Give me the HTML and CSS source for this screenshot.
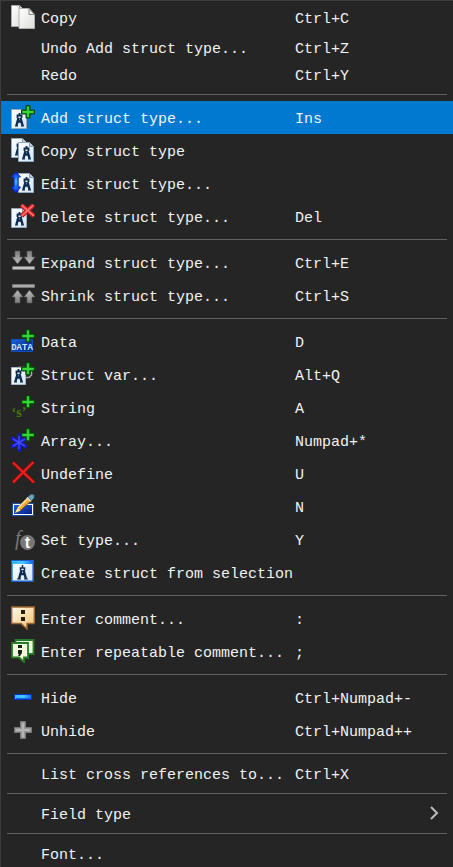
FILE: index.html
```html
<!DOCTYPE html>
<html lang="en">
<head>
<meta charset="utf-8">
<title>Structures menu</title>
<link rel="stylesheet" href="styles.css">
</head>
<body>
<svg class="sprite" aria-hidden="true">
  <defs>
    <linearGradient id="paper" x1="0" y1="0" x2="1" y2="1"><stop offset="0" stop-color="#fff"/><stop offset="1" stop-color="#dededa"/></linearGradient>
    <linearGradient id="sheet" x1="0" y1="0" x2="1" y2="1"><stop offset="0" stop-color="#fff"/><stop offset="1" stop-color="#d3e4f2"/></linearGradient>
    <linearGradient id="steel" x1="0" y1="0" x2="0" y2="1"><stop offset="0" stop-color="#7c7c7c"/><stop offset="1" stop-color="#bdbdbd"/></linearGradient>
    <linearGradient id="blue" x1="0" y1="0" x2="1" y2="1"><stop offset="0" stop-color="#1b62d8"/><stop offset="1" stop-color="#0a1c86"/></linearGradient>
    <linearGradient id="cream" x1="0" y1="0" x2="1" y2="1"><stop offset="0" stop-color="#fffbe6"/><stop offset="1" stop-color="#f5c06c"/></linearGradient>
    <linearGradient id="bar" x1="0" y1="0" x2="1" y2="0"><stop offset="0" stop-color="#35b4ff"/><stop offset=".5" stop-color="#45caff"/><stop offset="1" stop-color="#1268f0"/></linearGradient>
    <linearGradient id="updown" x1="0" y1="0" x2="0" y2="1"><stop offset="0" stop-color="#0718e8"/><stop offset=".45" stop-color="#39b6fa"/><stop offset="1" stop-color="#0718e8"/></linearGradient>
    <g id="compass" fill="none" stroke="#0d2c50">
      <path d="M4.500 0v2M2.500 5V2.500h4V5" stroke-width="1.800"/>
      <path d="M3.500 5L1.300 13M5.500 5l2.200 8M2 8.500h5" stroke-width="2.400"/>
      <path d="M0 13h3M6 13h3" stroke-width="1.200"/>
    </g>
    <g id="struct">
      <path d="M.5 4.500h11l4 4v15H.5z" fill="url(#sheet)" stroke="#8fa9c0"/>
      <path d="M11.500 4.500v4h4" fill="#bdd0df" stroke="#8398aa"/>
      <use href="#compass" x="4" y="8"/>
    </g>
    <g id="plus">
      <path d="M15 .5h4V5h4.500v4H19v4h-4V9h-4.500V5H15z" fill="#0b8c17" stroke="#06420b"/>
      <path d="M17 1.500v10.500M11.500 7h11" stroke="#36d63a" stroke-width="1.800" fill="none"/>
    </g>
    <g id="arrow-down">
      <path d="M3 0h5v6h3L5.500 13 0 6h3z" fill="url(#steel)" stroke="#555" stroke-width=".6"/>
    </g>
  </defs>
</svg>

<main class="menu" role="menu">
  <button class="item" role="menuitem">
    <svg class="icon" viewBox="0 0 24 24" aria-hidden="true">
      <path d="M.5.5h8l4 4v17H.5z" fill="url(#paper)" stroke="#aaa"/><path d="M8.500.5v4h4" fill="#ccc" stroke="#999"/>
      <path d="M8 3.500h10l5.500 6v14H8z" fill="url(#paper)" stroke="#b0b0b0"/><path d="M18 3.500v6h5.500z" fill="#eee" stroke="#888"/>
    </svg>
    <span class="label">Copy</span><kbd>Ctrl+C</kbd>
  </button>
  <button class="item plain" role="menuitem"><span class="label">Undo Add struct type...</span><kbd>Ctrl+Z</kbd></button>
  <button class="item plain" role="menuitem"><span class="label">Redo</span><kbd>Ctrl+Y</kbd></button>
  <hr>
  <button class="item active" role="menuitem">
    <svg class="icon" viewBox="0 0 24 24" aria-hidden="true"><use href="#struct"/><use href="#plus"/></svg>
    <span class="label">Add struct type...</span><kbd>Ins</kbd>
  </button>
  <button class="item" role="menuitem">
    <svg class="icon" viewBox="0 0 24 24" aria-hidden="true"><use href="#struct" y="-4"/><use href="#struct" x="7"/></svg>
    <span class="label">Copy struct type</span>
  </button>
  <button class="item" role="menuitem">
    <svg class="icon" viewBox="0 0 24 24" aria-hidden="true">
      <use href="#struct" x="7" y="-2"/>
      <path d="M5 1L9.500 6H7v10h2.500L5 22 .5 16H3V6H.5z" fill="url(#updown)" stroke="#0726cd"/>
    </svg>
    <span class="label">Edit struct type...</span>
  </button>
  <button class="item" role="menuitem">
    <svg class="icon" viewBox="0 0 24 24" aria-hidden="true"><use href="#struct"/><path d="M10.500 1l12.500 11M22.500 1L10.500 12" stroke="#c81818" stroke-width="4.500"/><path d="M10.500 1l12.500 11M22.500 1L10.500 12" stroke="#fa6a6a" stroke-width="2"/></svg>
    <span class="label">Delete struct type...</span><kbd>Del</kbd>
  </button>
  <hr>
  <button class="item" role="menuitem">
    <svg class="icon" viewBox="0 0 24 24" aria-hidden="true"><use href="#arrow-down" x="1" y="1"/><use href="#arrow-down" x="13" y="1"/><path d="M1.500 16.500h22v3h-22z" fill="#c4c4c4" stroke="#787878"/></svg>
    <span class="label">Expand struct type...</span><kbd>Ctrl+E</kbd>
  </button>
  <button class="item" role="menuitem">
    <svg class="icon" viewBox="0 0 24 24" aria-hidden="true"><path d="M1.500 1.500h22v3h-22z" fill="#aaa" stroke="#777"/><g transform="matrix(1 0 0 -1 0 24)"><use href="#arrow-down" x="1" y="4"/><use href="#arrow-down" x="13" y="4"/></g></svg>
    <span class="label">Shrink struct type...</span><kbd>Ctrl+S</kbd>
  </button>
  <hr>
  <button class="item" role="menuitem">
    <svg class="icon" viewBox="0 0 24 24" aria-hidden="true"><path d="M.5 10.500h21v12H.5z" fill="url(#blue)" stroke="#0753ba"/><use href="#plus"/><text class="data-mark" x="11" y="21" text-anchor="middle">DATA</text></svg>
    <span class="label">Data</span><kbd>D</kbd>
  </button>
  <button class="item" role="menuitem">
    <svg class="icon" viewBox="0 0 24 24" aria-hidden="true"><path d="M7 5.500h13.500V13L18 15.500h-4" fill="none" stroke="#aaa" stroke-width="1.500"/><path d="M.5 5.500h14v17H.5z" fill="url(#sheet)" stroke="#a9b5c0"/><use href="#compass" x="3" y="7"/><use href="#plus"/></svg>
    <span class="label">Struct var...</span><kbd>Alt+Q</kbd>
  </button>
  <button class="item" role="menuitem">
    <svg class="icon" viewBox="0 0 24 24" aria-hidden="true"><text class="string-mark" x="8" y="22" text-anchor="middle">‘s’</text><use href="#plus"/></svg>
    <span class="label">String</span><kbd>A</kbd>
  </button>
  <button class="item" role="menuitem">
    <svg class="icon" viewBox="0 0 24 24" aria-hidden="true"><path d="M8 7v15M1.500 10.500l13 8M14.500 10.500l-13 8" stroke="#1717c4" stroke-width="4" stroke-linecap="round"/><path d="M8 8v13M2 11l12 7M14 11L2 18" stroke="#3c4cf5" stroke-width="1.500"/><use href="#plus"/></svg>
    <span class="label">Array...</span><kbd>Numpad+*</kbd>
  </button>
  <button class="item" role="menuitem">
    <svg class="icon" viewBox="0 0 24 24" aria-hidden="true"><path d="M2 1.500l21 20M22.500 1L2 21.500" stroke="#8d0909" stroke-width="3.500"/><path d="M2 1.500l21 20M22.500 1L2 21.500" stroke="#ee2020" stroke-width="2"/></svg>
    <span class="label">Undefine</span><kbd>U</kbd>
  </button>
  <button class="item" role="menuitem">
    <svg class="icon" viewBox="0 0 24 24" aria-hidden="true"><path d="M1.500 9.500h21v12h-21z" fill="#fff" stroke="#1d4ea5"/><path d="M3 11h18v9H3z" fill="url(#blue)"/><path d="M4 19l3-6L18 2l4 3L10 16z" fill="#f5af37" stroke="#7a4a12"/><path d="M7 14L18 3" stroke="#ffeaa3" stroke-width="1.500"/><path d="M4 19l2.500-5 3 2.500z" fill="#ffe7bd"/><path d="M17 3l3-2.500 3 .5v3l-2.500 2.500z" fill="#6fa5bd" stroke="#416b80"/><path d="M16 3.500l4 4" stroke="#ddd" stroke-width="1.500"/></svg>
    <span class="label">Rename</span><kbd>N</kbd>
  </button>
  <button class="item" role="menuitem">
    <svg class="icon" viewBox="0 0 24 24" aria-hidden="true"><text class="function-mark" x="4" y="18">f</text><circle cx="16.500" cy="15.500" r="7.500" fill="#777"/><text class="type-mark" x="16.500" y="21" text-anchor="middle">t</text></svg>
    <span class="label">Set type...</span><kbd>Y</kbd>
  </button>
  <button class="item" role="menuitem">
    <svg class="icon" viewBox="0 0 24 24" aria-hidden="true"><path d="M.8.800h21.400v20.400H.8z" fill="url(#sheet)" stroke="#1b5fd0" stroke-width="1.600"/><path d="M1 1h21v3H1z" fill="url(#bar)"/><g transform="translate(6 5)"><path d="M5.500 0v3M3.500 5.500V3h4v2.500" fill="none" stroke="#0d2c50" stroke-width="1.500"/><path d="M4.500 5L2 14M6.500 5L9 14M3 9h5" stroke="#0d2c50" stroke-width="2.400"/><path d="M0 14h4M7 14h4" stroke="#0d2c50"/></g></svg>
    <span class="label">Create struct from selection</span>
  </button>
  <hr>
  <button class="item" role="menuitem">
    <svg class="icon" viewBox="0 0 24 24" aria-hidden="true"><path d="M.7 1h22.600v16.500H16V23l-6-5.500H.7z" fill="url(#cream)" stroke="#9b6732" stroke-width="1.400"/><path d="M10 4h4v4h-4zM10 11h4v4h-4z" fill="#241d14"/></svg>
    <span class="label">Enter comment...</span><kbd>:</kbd>
  </button>
  <button class="item" role="menuitem">
    <svg class="icon" viewBox="0 0 24 24" aria-hidden="true"><path d="M4.500 1h18v14H17v4l-5-4H4.500z" fill="#e9f8dc" stroke="#267b26" stroke-width="1.800"/><path d="M1 4h16v14.500h-4V23l-5-4.500H1z" fill="#f3f7dc" stroke="#267b26" stroke-width="1.800"/><path d="M7 6h4v3H7zM7 11h4v3l-2 3H7l1-2H7z" fill="#162516"/></svg>
    <span class="label">Enter repeatable comment...</span><kbd>;</kbd>
  </button>
  <hr>
  <button class="item" role="menuitem">
    <svg class="icon" viewBox="0 0 24 24" aria-hidden="true"><path d="M3.500 9.500h17v5h-17z" fill="url(#bar)" stroke="#0a2fc8"/><path d="M5 13.500h15" stroke="#1467e5"/></svg>
    <span class="label">Hide</span><kbd>Ctrl+Numpad+-</kbd>
  </button>
  <button class="item" role="menuitem">
    <svg class="icon" viewBox="0 0 24 24" aria-hidden="true"><path d="M9.500 3.500h5v6h6v5h-6v6h-5v-6h-6v-5h6z" fill="#999" stroke="#777"/><path d="M12 5v14M5 12h14" stroke="#b4b4b4" stroke-width="2"/></svg>
    <span class="label">Unhide</span><kbd>Ctrl+Numpad++</kbd>
  </button>
  <hr>
  <button class="item plain" role="menuitem"><span class="label">List cross references to...</span><kbd>Ctrl+X</kbd></button>
  <hr>
  <button class="item plain" role="menuitem" aria-haspopup="true">
    <span class="label">Field type</span>
    <svg class="chevron" viewBox="0 0 9 14" aria-hidden="true"><path d="M1 1l6 6-6 6" fill="none" stroke="#bcbcbc" stroke-width="2"/></svg>
  </button>
  <hr>
  <button class="item plain" role="menuitem"><span class="label">Font...</span></button>
</main>
</body>
</html>
```
FILE: styles.css
```css
* {
  box-sizing: border-box;
}

body {
  margin: 0;
  background: #252525;
}

.sprite {
  position: absolute;
  width: 0;
  height: 0;
}

.menu {
  border-top: 1px solid #3c3c3c;
  border-left: 1px solid #3c3c3c;
  background: #252525;
}

.item {
  display: grid;
  grid-template-columns: 24px 248px 1fr auto;
  column-gap: 6px;
  align-items: center;
  width: 100%;
  height: 33px;
  margin: 0;
  padding: 0 14px 0 10px;
  border: 0;
  background: transparent;
  color: #f2f2f2;
  font: 15px/18px "Liberation Mono", monospace;
  text-align: left;
  white-space: nowrap;
}

.item.plain {
  height: 27px;
}

.item.active {
  background: #007ad0;
}

.icon {
  grid-column: 1;
  display: block;
  width: 24px;
  height: 24px;
  margin-bottom: 1px;
}

.label {
  grid-column: 2;
  padding-top: 5px;
}

kbd {
  grid-column: 3;
  padding-top: 5px;
  font: inherit;
}

.chevron {
  grid-column: 4;
  width: 9px;
  height: 14px;
  margin-bottom: 2px;
}

hr {
  height: 1px;
  margin: 6px;
  border: 0;
  background: #606060;
}

.data-mark {
  fill: #c5e4ff;
  font: bold 9px "Liberation Mono", monospace;
}

.string-mark {
  fill: #447b0c;
  font: bold 14px "Liberation Serif", serif;
}

.function-mark {
  fill: #777;
  font: italic 20px "Liberation Serif", serif;
}

.type-mark {
  fill: #fff;
  font: bold 16px "Liberation Sans", sans-serif;
}
```
